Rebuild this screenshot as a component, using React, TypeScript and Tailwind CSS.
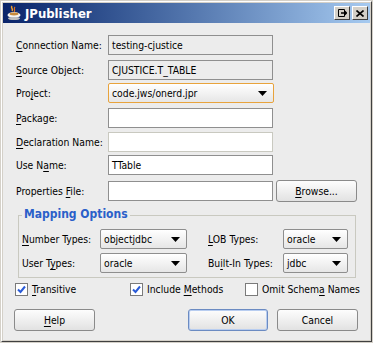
import React from "react";

const FONT = { fontFamily: '"DejaVu Sans Condensed", "DejaVu Sans", sans-serif' };

// underline a single mnemonic letter
function Mn({ text, at }: { text: string; at: number }) {
  return (
    <>
      {text.slice(0, at)}
      <span className="underline underline-offset-2">{text[at]}</span>
      {text.slice(at + 1)}
    </>
  );
}

function Arrow() {
  return (
    <svg width="9" height="5" viewBox="0 0 9 5" className="shrink-0">
      <path d="M0 0 H9 L4.5 5 Z" fill="#000" />
    </svg>
  );
}

function Combo({ value, w, focus }: { value: string; w: string; focus?: boolean }) {
  return (
    <div
      className={[
        "flex h-[20px] items-center justify-between rounded-[2px] border pl-[3px] pr-[6px] bg-gradient-to-b from-[#ffffff] to-[#e6e6e6]",
        w,
        focus ? "border-[#e8a33c]" : "border-[#8e8e8e]",
      ].join(" ")}
    >
      <span>{value}</span>
      <Arrow />
    </div>
  );
}

function Field({ value, ro, light }: { value?: string; ro?: boolean; light?: boolean }) {
  return (
    <div
      className={[
        "flex h-[20px] w-[165px] items-center border px-[3px]",
        ro ? "bg-[#ececec] border-[#8f8f8f]" : "bg-white",
        !ro && light ? "border-[#c9c9c0]" : "",
        !ro && !light ? "border-[#8f8f8f]" : "",
      ].join(" ")}
    >
      {value}
    </div>
  );
}

function Button({ children, w, def }: { children: React.ReactNode; w: string; def?: boolean }) {
  return (
    <div
      className={[
        "flex h-[22px] items-center justify-center rounded-[3px] border bg-gradient-to-b from-[#fdfdfd] to-[#e2e2e2]",
        w,
        def ? "border-[#6b8bc2] shadow-[inset_0_0_0_1px_#b8cdf0]" : "border-[#8a8a8a]",
      ].join(" ")}
    >
      {children}
    </div>
  );
}

function Check({ on, label, w }: { on?: boolean; label: React.ReactNode; w: string }) {
  return (
    <div className={["flex items-center gap-[4px]", w].join(" ")}>
      <div className="flex h-[13px] w-[13px] shrink-0 items-center justify-center border border-[#7a7a7a] bg-white">
        {on && (
          <svg width="9" height="9" viewBox="0 0 9 9">
            <path d="M1 4.5 L3.5 7 L8 1.5" stroke="#2a5bd7" strokeWidth="2" fill="none" />
          </svg>
        )}
      </div>
      <span className="whitespace-nowrap">{label}</span>
    </div>
  );
}

function Row({ label, children, mt }: { label: React.ReactNode; children: React.ReactNode; mt: string }) {
  return (
    <div className={["flex items-center", mt].join(" ")}>
      <div className="w-[92px] whitespace-nowrap">{label}</div>
      {children}
    </div>
  );
}

export default function App() {
  return (
    <div
      className="h-[343px] w-[373px] border border-[#d4d0c8] bg-[#d4d0c8] text-[10.3px] leading-none text-black"
      style={FONT}
    >
      <div className="flex h-[341px] flex-col border border-l-[#ffffff] border-t-[#ffffff] border-r-[#404040] border-b-[#404040] p-[1px]">
        {/* title bar */}
        <div className="flex h-[20px] shrink-0 items-center bg-gradient-to-r from-[#0a246a] to-[#a6caf0] pl-[3px] pr-[2px]">
          <svg width="16" height="16" viewBox="0 0 16 16">
            <path d="M6 1 C4 3 8 4 6 6" stroke="#f0a030" strokeWidth="1.5" fill="none" />
            <path d="M9 2 C7 4 10 5 8 7" stroke="#e07020" strokeWidth="1.2" fill="none" />
            <ellipse cx="8" cy="10" rx="6.5" ry="3" fill="#f4f4f4" />
            <ellipse cx="8" cy="9" rx="4.5" ry="1.4" fill="#c88a3a" />
            <ellipse cx="8" cy="13.5" rx="6" ry="1.6" fill="#bdbdbd" />
          </svg>
          <span className="ml-[3px] text-[13px] font-bold text-white">JPublisher</span>
          <div className="ml-auto flex gap-[2px]">
            <div className="flex h-[14px] w-[16px] items-center justify-center border border-l-white border-t-white border-r-[#404040] border-b-[#404040] bg-[#d4d0c8]">
              <svg width="9" height="8" viewBox="0 0 9 8">
                <path d="M0.5 0.5 H6.5 V7.5 H0.5 Z" stroke="#000" fill="none" />
                <path d="M3 4 H8.5 M6.5 2 L8.5 4 L6.5 6" stroke="#000" strokeWidth="1.3" fill="none" />
              </svg>
            </div>
            <div className="flex h-[14px] w-[16px] items-center justify-center border border-l-white border-t-white border-r-[#404040] border-b-[#404040] bg-[#d4d0c8]">
              <svg width="8" height="7" viewBox="0 0 8 7">
                <path d="M0.5 0.5 L7.5 6.5 M7.5 0.5 L0.5 6.5" stroke="#000" strokeWidth="1.6" />
              </svg>
            </div>
          </div>
        </div>

        {/* body */}
        <div className="flex flex-1 flex-col bg-[#ececec] pl-[13px] pt-[12px]">
          <Row label={<Mn text="Connection Name:" at={0} />} mt="mt-0">
            <Field value="testing-cjustice" ro />
          </Row>
          <Row label={<Mn text="Source Object:" at={0} />} mt="mt-[5px]">
            <Field value="CJUSTICE.T_TABLE" ro />
          </Row>
          <Row label={<Mn text="Project:" at={3} />} mt="mt-[3px]">
            <Combo value="code.jws/onerd.jpr" w="w-[166px]" focus />
          </Row>
          <Row label={<Mn text="Package:" at={0} />} mt="mt-[5px]">
            <Field />
          </Row>
          <Row label={<Mn text="Declaration Name:" at={0} />} mt="mt-[4px]">
            <Field light />
          </Row>
          <Row label={<Mn text="Use Name:" at={5} />} mt="mt-[3px]">
            <Field value="TTable" />
          </Row>
          <Row label={<Mn text="Properties File:" at={11} />} mt="mt-[5px]">
            <Field />
            <div className="ml-[3px]">
              <Button w="w-[81px]">
                <Mn text="Browse..." at={0} />
              </Button>
            </div>
          </Row>

          {/* mapping options group */}
          <div className="relative ml-[2px] mt-[13px] h-[63px] w-[338px] border border-[#c9c9c0] pl-[3px] pt-[13px]">
            <span className="absolute -top-[8px] left-[3px] whitespace-nowrap bg-[#ececec] px-[2px] text-[12px] font-bold text-[#2a5fc9]">
              Mapping Options
            </span>
            <div className="flex items-center whitespace-nowrap">
              <div className="w-[78px]"><Mn text="Number Types:" at={0} /></div>
              <Combo value="objectjdbc" w="w-[87px]" />
              <div className="ml-[21px] w-[75px]"><Mn text="LOB Types:" at={0} /></div>
              <Combo value="oracle" w="w-[65px]" />
            </div>
            <div className="mt-[4px] flex items-center whitespace-nowrap">
              <div className="w-[78px]"><Mn text="User Types:" at={6} /></div>
              <Combo value="oracle" w="w-[87px]" />
              <div className="ml-[21px] w-[75px]"><Mn text="Built-In Types:" at={2} /></div>
              <Combo value="jdbc" w="w-[65px]" />
            </div>
          </div>

          <div className="-ml-[1px] mt-[5px] flex items-center">
            <Check on label={<Mn text="Transitive" at={0} />} w="w-[115px]" />
            <Check on label={<Mn text="Include Methods" at={8} />} w="w-[115px]" />
            <Check label={<Mn text="Omit Schema Names" at={10} />} w="w-[120px]" />
          </div>

          <div className="-ml-[2px] mt-[13px] flex items-center">
            <Button w="w-[81px]"><Mn text="Help" at={0} /></Button>
            <div className="ml-[93px]">
              <Button w="w-[80px]" def>OK</Button>
            </div>
            <div className="ml-[9px]">
              <Button w="w-[81px]">Cancel</Button>
            </div>
          </div>
        </div>
      </div>
    </div>
  );
}
